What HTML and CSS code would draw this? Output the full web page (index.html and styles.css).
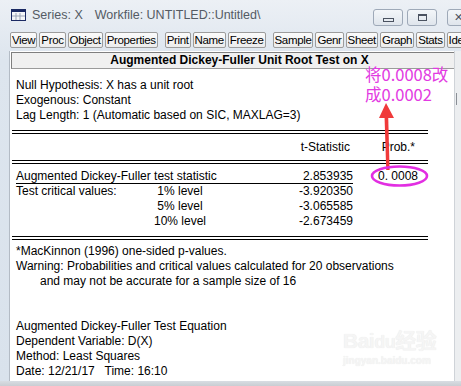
FILE: index.html
```html
<!DOCTYPE html>
<html lang="en">

<head>
  <meta charset="UTF-8" />
  <meta name="viewport" content="width=device-width, initial-scale=1.0" />
  <title>Series: X</title>
  <link rel="stylesheet" href="styles.css">
</head>

<body>
  <div class="window">
    <!-- title bar -->
    <div class="titlebar">
      <svg class="app-icon" width="15" height="12" viewBox="0 0 15 12">
        <rect x="0.5" y="0.5" width="14" height="11" fill="#f4f6f8" stroke="#1b2a63" />
        <rect x="1" y="1" width="13" height="2" fill="#1b2a63" />
        <path d="M5 4v7M9 4v7M1 7h13" stroke="#9aa3b5" stroke-width="1" />
      </svg>
      <span class="title">Series: X</span>
      <span class="title wf">Workfile: UNTITLED::Untitled\</span>
      <div class="caption">
        <span class="cbtn"><i class="min"></i></span>
        <span class="cbtn"><i class="max"></i></span>
        <span class="cbtn close">&#x2715;</span>
      </div>
    </div>

    <!-- toolbar -->
    <div class="toolbar">
      <span class="btn">View</span>
      <span class="btn">Proc</span>
      <span class="btn">Object</span>
      <span class="btn">Properties</span>
      <span class="btn sep">Print</span>
      <span class="btn">Name</span>
      <span class="btn">Freeze</span>
      <span class="btn sep">Sample</span>
      <span class="btn">Genr</span>
      <span class="btn">Sheet</span>
      <span class="btn">Graph</span>
      <span class="btn">Stats</span>
      <span class="btn">Ident</span>
    </div>

    <!-- output -->
    <div class="panel">
      <div class="content">
        <div class="head">Augmented Dickey-Fuller Unit Root Test on X</div>
        <div class="out">
          <p>Null Hypothesis: X has a unit root</p>
          <p>Exogenous: Constant</p>
          <p>Lag Length: 1 (Automatic based on SIC, MAXLAG=3)</p>

          <div class="rule r1"></div>
          <div class="row colhead">
            <span></span><span></span>
            <span class="num">t-Statistic</span>
            <span class="num">Prob.*</span>
          </div>
          <div class="rule r2"></div>

          <div class="row adf">
            <span class="label">Augmented Dickey-Fuller test statistic</span>
            <span class="num val">2.853935</span>
            <span class="num prob">0. 0008</span>
          </div>
          <div class="row">
            <span>Test critical values:</span>
            <span class="lvl">1% level</span>
            <span class="num">-3.920350</span>
            <span></span>
          </div>
          <div class="row">
            <span></span>
            <span class="lvl">5% level</span>
            <span class="num">-3.065585</span>
            <span></span>
          </div>
          <div class="row">
            <span></span>
            <span class="lvl">10% level</span>
            <span class="num">-2.673459</span>
            <span></span>
          </div>

          <div class="rule r3"></div>
          <p class="note">*MacKinnon (1996) one-sided p-values.</p>
          <p>Warning: Probabilities and critical values calculated for 20 observations</p>
          <p class="indent">and may not be accurate for a sample size of 16</p>

          <p class="eq">Augmented Dickey-Fuller Test Equation</p>
          <p>Dependent Variable: D(X)</p>
          <p>Method: Least Squares</p>
          <p class="pre">Date: 12/21/17   Time: 16:10</p>
        </div>
      </div>
      <div class="vscroll"><i></i></div>
    </div>
    <div class="bottom"></div>

    <!-- watermark -->
    <div class="watermark">
      <span class="wm-logo">Bai<b>du</b>经验</span>
      <span class="wm-url">jingyan.baidu.com</span>
    </div>

    <!-- annotation -->
    <p class="note-red">将0.0008改<br>成0.0002</p>
    <svg class="mark" width="461" height="386" viewBox="0 0 461 386">
      <polygon points="384.5,116 388.2,116 389.6,170 386.2,170" fill="#f03a3a" />
      <polygon points="386,103 379,118 394,118" fill="#f03a3a" />
      <ellipse cx="399.5" cy="176" rx="27.5" ry="9.5" fill="none" stroke="#e22ee2" stroke-width="2.6" />
    </svg>
  </div>
</body>

</html>
```

FILE: styles.css
```css
body {
  margin: 0;
  padding: 0;
  font-family: "Liberation Sans", Arial, sans-serif;
}

/* 外框 */
.window {
  position: relative;
  width: 461px;
  height: 386px;
  overflow: hidden;
  display: flex;
  flex-direction: column;
  background: linear-gradient(#ecf0f5, #dde5ee 60px, #d9e2ec);
}

/* 标题栏 */
.titlebar {
  height: 30px;
  display: flex;
  align-items: center;
  padding-left: 11px;
  flex-shrink: 0;
}

.titlebar .app-icon {
  margin-top: -1px;
}

.titlebar .title {
  margin-left: 6px;
  font-size: 12.5px;
  color: #545b64;
}

.titlebar .wf {
  margin-left: 12px;
}

.caption {
  margin-left: auto;
  margin-right: -30px;
  align-self: flex-start;
  margin-top: 9px;
  display: flex;
  gap: 4px;
}

.cbtn {
  width: 30px;
  height: 17px;
  box-sizing: border-box;
  border: 1px solid #9ea9b8;
  border-radius: 3px;
  background: linear-gradient(#f3f6f9, #dfe5ec);
  display: flex;
  align-items: center;
  justify-content: center;
}

.cbtn.close {
  width: 44px;
  margin-left: 6px;
  font-size: 11px;
  color: #4a5260;
  justify-content: flex-start;
  padding-left: 6px;
}

.cbtn .min {
  width: 9px;
  height: 2px;
  border: 1px solid #4a5260;
  margin-top: 5px;
}

.cbtn .max {
  width: 7px;
  height: 4px;
  border: 1px solid #4a5260;
  border-top-width: 2px;
}

/* 工具栏 */
.toolbar {
  height: 21px;
  display: flex;
  gap: 2px;
  padding: 2px 0 0 10px;
  box-sizing: border-box;
  flex-shrink: 0;
  white-space: nowrap;
}

.toolbar .btn {
  height: 16px;
  box-sizing: border-box;
  padding: 0 1px;
  border: 1px solid #9c9c9c;
  border-radius: 2px;
  background: linear-gradient(#fbfbfb, #ececec);
  font-size: 11.5px;
  letter-spacing: -0.35px;
  line-height: 14px;
  color: #000;
  flex-shrink: 0;
}

.toolbar .sep {
  margin-left: 5px;
}

/* 输出面板 */
.panel {
  height: 330px;
  margin-left: 9px;
  display: flex;
  flex-shrink: 0;
  border-left: 1px solid #b3bbc5;
}

.content {
  flex: 1;
  background: #fff;
  padding-top: 1px;
}

.vscroll {
  width: 6px;
  background: #eceef0;
  border-left: 1px solid #cfd3d8;
}

.vscroll i {
  display: block;
  margin-top: 42px;
  margin-left: 1px;
  height: 12px;
  border-left: 1px solid #8a8f96;
}

.bottom {
  flex: 1;
  background: linear-gradient(#d8dde3, #c9cdd2);
}

.head {
  height: 17px;
  box-sizing: border-box;
  margin: 0 -2px 0 1px;
  padding-left: 12px;
  border: 1px solid #7f7f7f;
  border-bottom-color: #9a9a9a;
  border-right-color: #d0d0d0;
  background: #f0f0f0;
  text-align: center;
  font-size: 12px;
  font-weight: bold;
  line-height: 15px;
  color: #000;
}

.out {
  padding: 9px 0 0 6px;
  font-size: 12px;
  line-height: 15px;
  color: #000;
}

.out p {
  margin: 0;
  white-space: nowrap;
}

.out .indent {
  padding-left: 24px;
}

.out .pre {
  white-space: pre;
}

.out .note {
  margin-top: 4px;
}

.out .eq {
  margin-top: 30px;
}

/* 双线 */
.rule {
  width: 416px;
  height: 2px;
  margin-left: -4px;
  border-top: 1px solid #000;
  border-bottom: 1px solid #000;
}

.rule.r1 {
  margin-top: 7px;
}

.rule.r2 {
  margin-top: 5px;
}

.rule.r3 {
  margin-top: 7px;
}

/* 结果表格 */
.row {
  display: grid;
  grid-template-columns: 126px 76px 135px 65px;
  height: 15px;
}

.row .lvl {
  text-align: center;
}

.row .num {
  text-align: right;
}

.colhead {
  margin-top: 6px;
}

.colhead .num {
  padding-right: 3px;
}

.adf {
  margin-top: 5px;
}

.adf .label {
  grid-column: 1 / 3;
}

.adf .label,
.adf .val {
  line-height: 14px;
  border-bottom: 1px solid #000;
}

.adf .prob {
  line-height: 14px;
}

/* 水印 */
.watermark {
  position: absolute;
  left: 343px;
  top: 328px;
  display: flex;
  flex-direction: column;
  color: #f5f5f5;
  text-shadow: 0 0 1px #e6e6e6;
}

.wm-logo {
  font-family: "Liberation Sans", "Noto Sans CJK SC", sans-serif;
  font-size: 21px;
  font-weight: bold;
  line-height: 26px;
  letter-spacing: -0.5px;
}

.wm-logo b {
  font-size: 18px;
}

.wm-url {
  font-size: 10px;
  font-weight: bold;
  line-height: 12px;
}

/* 标注 */
.note-red {
  position: absolute;
  left: 365px;
  top: 64px;
  margin: 0;
  font-family: "Noto Sans CJK SC", sans-serif;
  font-size: 16.5px;
  line-height: 20px;
  color: #e23ae2;
}

.mark {
  position: absolute;
  left: 0;
  top: 0;
}
```
